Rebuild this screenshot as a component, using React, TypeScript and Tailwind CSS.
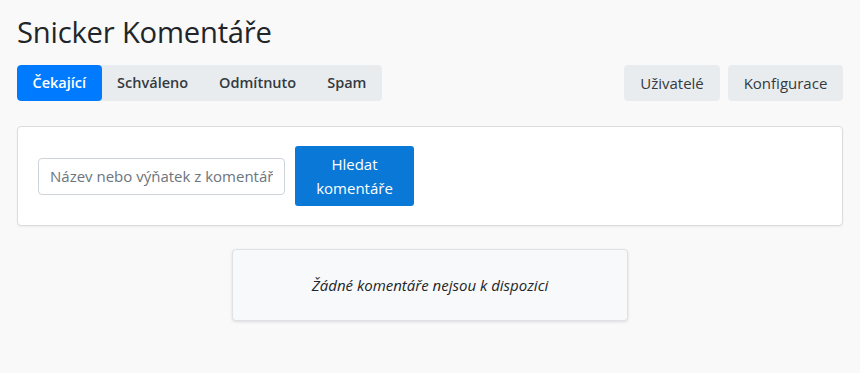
const tabs = ["Čekající", "Schváleno", "Odmítnuto", "Spam"];

export default function App() {
  return (
    <div
      className="min-h-[373px] bg-[#f9f9f9] px-[17px] pt-[11px] text-[#212529]"
      style={{ fontFamily: '"Open Sans", "Noto Sans", sans-serif' }}
    >
      <h1 className="text-[29.2px] leading-[42px] font-normal tracking-[-0.2px]">
        Snicker Komentáře
      </h1>

      <div className="mt-[12px] flex items-center justify-between">
        <div className="flex h-[36px] rounded-[4px] bg-[#e9ecef] overflow-hidden">
          {tabs.map((t, i) => (
            <div
              key={t}
              className={
                i === 0
                  ? "flex items-center rounded-[4px] bg-[#007bff] px-[15.5px] text-[14.5px] font-semibold text-white"
                  : "flex items-center px-[15.5px] text-[14.5px] font-semibold text-[#343a40]"
              }
            >
              {t}
            </div>
          ))}
        </div>
        <div className="flex gap-[8px]">
          <button className="h-[36px] w-[96px] rounded-[4px] bg-[#e9ecef] text-[15px] text-[#343a40]">
            Uživatelé
          </button>
          <button className="h-[36px] w-[115px] rounded-[4px] bg-[#e9ecef] text-[15px] text-[#343a40]">
            Konfigurace
          </button>
        </div>
      </div>

      <div className="mt-[25px] flex h-[100px] items-center gap-[10px] rounded-[4px] border border-[#dcdcdc] bg-white px-[20px] shadow-[0_1px_2px_rgba(0,0,0,0.06)]">
        <input
          className="h-[37px] w-[247px] rounded-[4px] border border-[#ced4da] px-[11px] text-[15px] text-[#495057] placeholder:text-[#6c757d] outline-none"
          placeholder="Název nebo výňatek z komentáře"
        />
        <button className="h-[60px] w-[119px] rounded-[3px] bg-[#0a78d6] text-[15px] leading-[24px] text-white">
          Hledat
          <br />
          komentáře
        </button>
      </div>

      <div className="mt-[23px] flex justify-center">
        <div className="flex h-[72px] w-[396px] items-center justify-center rounded-[4px] border border-[#dee2e6] bg-[#f8f9fa] shadow-[0_1px_3px_rgba(0,0,0,0.12)]">
          <span className="text-[15px] italic text-[#212529]">
            Žádné komentáře nejsou k dispozici
          </span>
        </div>
      </div>
    </div>
  );
}
